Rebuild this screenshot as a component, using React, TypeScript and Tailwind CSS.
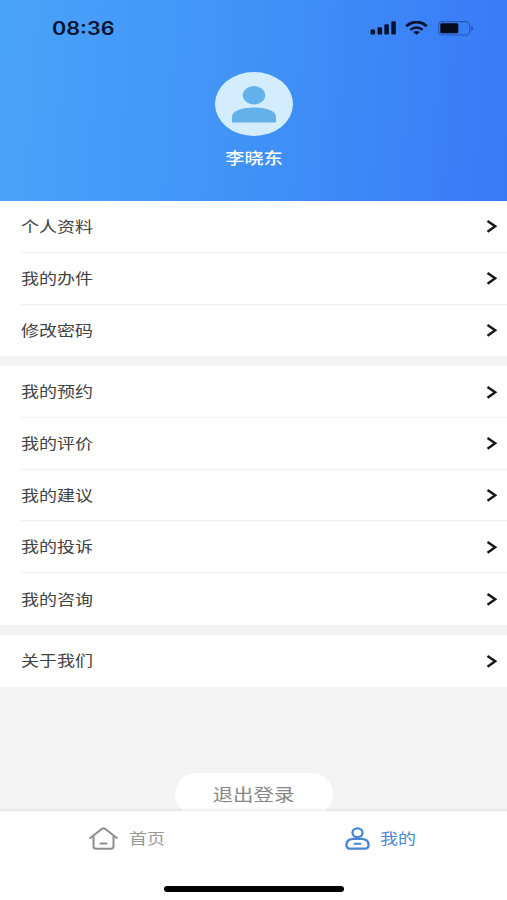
import { FC } from 'react';

interface MenuItemProps {
  title: string;
  last: boolean;
}

const groups = [
  ['个人资料', '我的办件', '修改密码'],
  ['我的预约', '我的评价', '我的建议', '我的投诉', '我的咨询'],
  ['关于我们'],
];

const StatusBar: FC = () => {
  return (
    <div className="flex h-14 items-center justify-between pl-[52px] pr-[33px] text-[#08142f]">
      <span className="w-[62px] origin-left scale-x-[1.2] pt-[2px] text-[18px] font-semibold leading-none font-['Inter','Liberation_Sans',sans-serif]">
        08:36
      </span>
      <div className="flex items-center">
        <svg width="27" height="14" viewBox="0 0 27 14" fill="#06122e">
          <rect x="0.5" y="8.5" width="4.6" height="5" rx="1.2" />
          <rect x="7.5" y="6.3" width="4.6" height="7.2" rx="1.2" />
          <rect x="14.3" y="3.3" width="4.6" height="10.2" rx="1.2" />
          <rect x="21.3" y="0.3" width="4.6" height="13.2" rx="1.2" />
        </svg>
        <svg className="ml-2" width="23" height="14" viewBox="0 0 23 14" fill="none" stroke="#06122e">
          <path d="M1.3 5.2C7-.4 16 -.4 21.7 5.2" strokeWidth="2.8" />
          <path d="M5.4 8.9C9 5.7 14 5.7 17.6 8.9" strokeWidth="2.5" />
          <path d="M8.1 11.1Q11.5 8.7 14.9 11.1L11.5 13.8Z" fill="#06122e" stroke="none" />
        </svg>
        <svg className="ml-[10px]" width="36" height="15" viewBox="0 0 36 15" fill="none">
          <rect x="0.6" y="0.6" width="31" height="13.4" rx="3.6" stroke="#2459ad" strokeWidth="1.1" />
          <rect x="2.3" y="2.3" width="18" height="10" rx="1.4" fill="#030b1d" />
          <path d="M33.2 5V10Q35.2 9.2 35.2 7.5Q35.2 5.8 33.2 5Z" fill="#2459ad" />
        </svg>
      </div>
    </div>
  );
};

const MenuItem: FC<MenuItemProps> = ({ title, last }) => {
  return (
    <li className="flex h-[51.75px] pl-[21px]">
      <div className={`flex flex-1 items-center justify-between pr-[10px] ${last ? '' : 'border-b border-[#f0f0f0]'}`}>
        <span className="origin-left scale-x-[1.2] pb-[2px] text-[15px] leading-none text-[#424242]">{title}</span>
        <svg width="11" height="14" viewBox="0 0 11 14" fill="none" stroke="#161616" strokeWidth="2.4">
          <path d="M1.5 1.9L9.2 7.3L1.5 12.7" />
        </svg>
      </div>
    </li>
  );
};

const App: FC = () => {
  return (
    <div className="flex h-[900px] w-[507px] flex-col overflow-hidden bg-[#f3f3f3] font-['Noto_Sans_CJK_SC',sans-serif]">
      <header className="h-[201px] shrink-0 bg-[linear-gradient(94deg,#4aa3fa_0%,#4193f7_48%,#3879f8_100%)]">
        <StatusBar />
        <div className="flex flex-col items-center pt-4">
          <svg width="78" height="64" viewBox="0 0 78 64">
            <ellipse cx="39" cy="32" rx="39" ry="32" fill="#d3edfe" />
            <ellipse cx="39" cy="23.2" rx="11.2" ry="9.2" fill="#63b0eb" />
            <path d="M17 50.5V44.5C17 38.5 28 35.5 39 35.5S61 38.5 61 44.5V50.5Z" fill="#63b0eb" />
          </svg>
          <span className="mt-[13px] ml-px scale-x-[1.2] text-[16px] font-medium leading-none text-white">李晓东</span>
        </div>
      </header>

      <main className="flex flex-1 flex-col gap-[9.9px] overflow-hidden">
        {groups.map((items) => (
          <ul key={items[0]} className="shrink-0 bg-white">
            {items.map((title, index) => (
              <MenuItem key={title} title={title} last={index === items.length - 1} />
            ))}
          </ul>
        ))}
        <button className="mx-auto mt-[76.5px] h-[42px] w-[158px] shrink-0 rounded-[21px] bg-white pr-px">
          <span className="block scale-x-[1.2] text-[17px] leading-none text-[#888888]">退出登录</span>
        </button>
      </main>

      <nav className="relative flex h-[89px] shrink-0 bg-white shadow-[0_-1px_3px_rgba(0,0,0,0.1)]">
        <a className="flex h-[54px] flex-1 items-center justify-center pr-px text-[#999999]">
          <svg width="29" height="23" viewBox="0 0 29 23" fill="none" stroke="#8d8d8d" strokeWidth="2" strokeLinejoin="round" strokeLinecap="round">
            <path d="M1.2 11L13 1.8Q14.5 .8 16 1.8L27.8 11" />
            <path d="M4.5 9V19.2Q4.5 21.8 7.5 21.8H21.5Q24.5 21.8 24.5 19.2V9" />
            <path d="M11.5 16.6H17.5" />
          </svg>
          <span className="ml-[14px] scale-x-[1.2] pb-[2px] text-[15px] leading-none">首页</span>
        </a>
        <a className="flex h-[54px] flex-1 items-center justify-center pr-[2px] text-[#4a89d8]">
          <svg width="25" height="23" viewBox="0 0 25 23" fill="none" stroke="#4a85d3" strokeWidth="2.3">
            <ellipse cx="12.5" cy="5.7" rx="5" ry="4.4" />
            <path d="M8 11.9H17Q23.6 12.3 23.6 18Q23.6 21.7 19.5 21.7H5.5Q1.4 21.7 1.4 18Q1.4 12.3 8 11.9Z" />
            <path d="M9.5 16.7H15.5" strokeWidth="2" strokeLinecap="round" />
          </svg>
          <span className="ml-[13px] scale-x-[1.2] pb-[2px] text-[15px] leading-none">我的</span>
        </a>
        <div className="absolute bottom-2 left-[164px] h-[6px] w-[180px] rounded-full bg-black" />
      </nav>
    </div>
  );
};

export default App;
